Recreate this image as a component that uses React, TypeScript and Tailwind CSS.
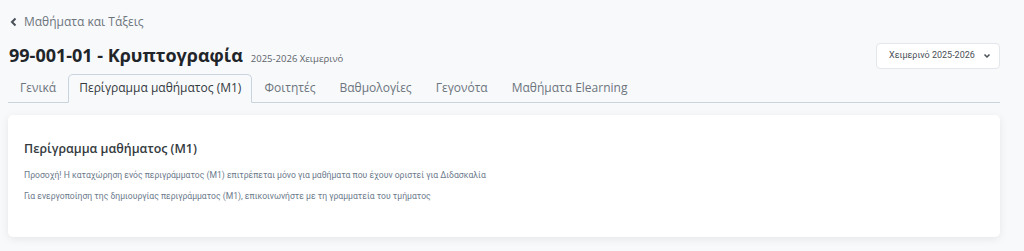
import React from "react";

const tabs = [
  "Γενικά",
  "Περίγραμμα μαθήματος (M1)",
  "Φοιτητές",
  "Βαθμολογίες",
  "Γεγονότα",
  "Μαθήματα Elearning",
];

export default function App() {
  const active = 1;

  return (
    <div className="min-h-[251px] w-full bg-[#f8f9fb] pl-2 pr-6 pt-[13px] font-['Open_Sans',sans-serif]">
      <div className="flex h-[18px] items-center gap-[6px] pl-[2px] text-[12px] text-[#6c757d]">
        <svg width="8" height="10" viewBox="0 0 8 10" className="text-[#495057]">
          <path d="M5.5 1.5 L2 5 L5.5 8.5" fill="none" stroke="currentColor" strokeWidth="2" />
        </svg>
        <span>Μαθήματα και Τάξεις</span>
      </div>

      <div className="mt-[11px] flex items-center justify-between">
        <div className="flex items-baseline gap-2 pl-[1px]">
          <h1 className="text-[18px] font-bold text-[#212529]">99-001-01 - Κρυπτογραφία</h1>
          <span className="text-[9.5px] text-[#5c636a]">2025-2026 Χειμερινό</span>
        </div>
        <div className="flex h-[26px] w-[124px] items-center justify-between rounded-[4px] border border-[#e3e6ea] bg-white pl-3 pr-2 font-['Roboto',sans-serif] text-[9px] whitespace-nowrap text-[#495057]">
          <span>Χειμερινό 2025-2026</span>
          <svg width="8" height="6" viewBox="0 0 8 6">
            <path d="M1.5 1.5 L4 4 L6.5 1.5" fill="none" stroke="#495057" strokeWidth="1.5" />
          </svg>
        </div>
      </div>

      <div className="mt-[5px] flex border-b border-[#c9d4de]">
        {tabs.map((t, i) => (
          <div
            key={t}
            className={
              i === active
                ? "-mb-px rounded-t-[5px] border border-[#c9d4de] border-b-[#f8f9fb] bg-[#f8f9fb] px-[10px] py-[4px] text-[12px] text-[#343a40]"
                : "border border-transparent px-[11px] py-[4px] text-[12px] text-[#6c757d]"
            }
          >
            {t}
          </div>
        ))}
      </div>

      <div className="mt-[12px] rounded-[5px] bg-white px-4 pt-[24px] pb-[34px] shadow-[0_2px_8px_rgba(0,0,0,0.08)]">
        <h2 className="text-[12.4px] leading-[19px] font-semibold text-[#343a40]">Περίγραμμα μαθήματος (M1)</h2>
        <p className="mt-[10px] font-['Roboto',sans-serif] text-[8.6px] leading-[14px] text-[#6b7a8c]">
          Προσοχή! Η καταχώρηση ενός περιγράμματος (M1) επιτρέπεται μόνο για μαθήματα που έχουν οριστεί για Διδασκαλία
        </p>
        <p className="mt-[7px] font-['Roboto',sans-serif] text-[8.6px] leading-[14px] text-[#6b7a8c]">
          Για ενεργοποίηση της δημιουργίας περιγράμματος (M1), επικοινωνήστε με τη γραμματεία του τμήματος
        </p>
      </div>
    </div>
  );
}
